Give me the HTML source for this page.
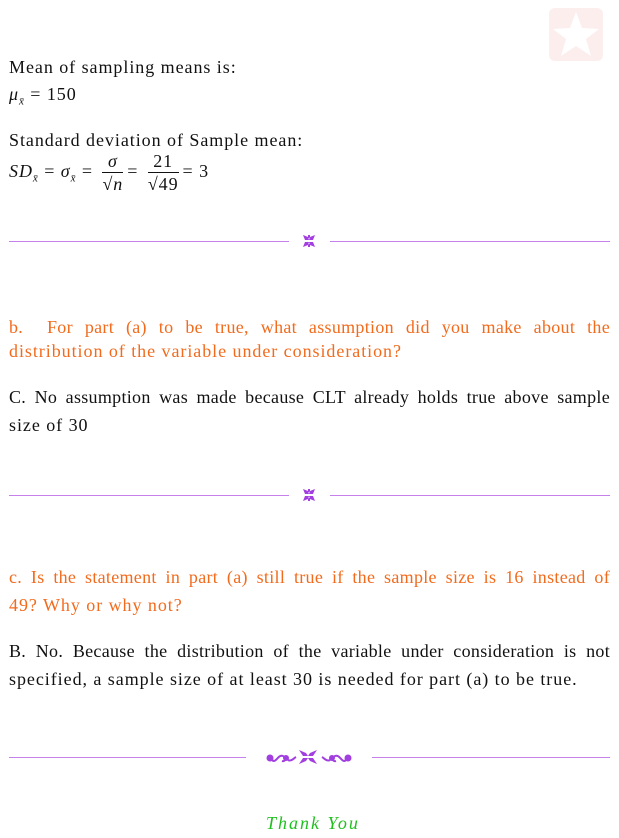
<!DOCTYPE html>
<html><head><meta charset="utf-8"><style>
body{margin:0;width:619px;height:838px;background:#fff;position:relative;font-family:"Liberation Serif",serif;font-size:18px;letter-spacing:0.95px;color:#111;overflow:hidden}
.t{position:absolute;left:9px;white-space:nowrap;line-height:20px}
.o{color:#f26b1d}
.j{width:601px;white-space:normal;text-align:justify;text-align-last:justify;letter-spacing:0.3px}
.hr{position:absolute;height:1px;background:#c77fe9;top:0}
i{font-style:italic}
.fr{display:inline-block;vertical-align:middle;text-align:center;margin:0 4px}
.fr span{display:block;line-height:22px}
.fr .n{border-bottom:1px solid #111}
</style></head><body>
<div style="position:absolute;left:549px;top:8px;width:54px;height:53px;background:#fdeeee;border-radius:6px"></div>
<svg style="position:absolute;left:549px;top:8px" width="54" height="53"><polygon points="27,4 33,20 50,21 37,31 42,48 27,38 12,48 17,31 4,21 21,20" fill="#fff"/></svg>
<div class="t" style="top:57px">Mean of sampling means is:</div>
<div class="t" style="top:84px"><i>μ</i><sub style="font-size:11px"><i>x̄</i></sub> = 150</div>
<div class="t" style="top:130px">Standard deviation of Sample mean:</div>
<div class="t" style="top:148px;line-height:46px"><i>SD</i><sub style="font-size:11px"><i>x̄</i></sub> = <i>σ</i><sub style="font-size:11px"><i>x̄</i></sub> = <span class="fr"><span class="n"><i>σ</i></span><span>√<i>n</i></span></span>= <span class="fr"><span class="n">21</span><span>√49</span></span>= 3</div>
<div class="hr" style="left:9px;top:241px;width:280px"></div>
<div class="hr" style="left:330px;top:241px;width:280px"></div>
<svg style="position:absolute;left:302px;top:234px" width="14" height="14" viewBox="0 0 14 14" fill="#a23fe0"><path d="M1 1 L6 3 L7 6 L3 6 Z M13 1 L8 3 L7 6 L11 6 Z M1 13 L6 11 L7 8 L3 8 Z M13 13 L8 11 L7 8 L11 8 Z M6 1 h2 v3 h-2z M6 10 h2 v3 h-2z"/></svg>
<div class="t o j" style="top:313px;line-height:28px">b.&nbsp; For part (a) to be true, what assumption did you make about the</div>
<div class="t o" style="top:341px">distribution of the variable under consideration?</div>
<div class="t j" style="top:387px">C. No assumption was made because CLT already holds true above sample</div>
<div class="t" style="top:415px">size of 30</div>
<div class="hr" style="left:9px;top:495px;width:280px"></div>
<div class="hr" style="left:330px;top:495px;width:280px"></div>
<svg style="position:absolute;left:302px;top:488px" width="14" height="14" viewBox="0 0 14 14" fill="#a23fe0"><path d="M1 1 L6 3 L7 6 L3 6 Z M13 1 L8 3 L7 6 L11 6 Z M1 13 L6 11 L7 8 L3 8 Z M13 13 L8 11 L7 8 L11 8 Z M6 1 h2 v3 h-2z M6 10 h2 v3 h-2z"/></svg>
<div class="t o j" style="top:567px">c. Is the statement in part (a) still true if the sample size is 16 instead of</div>
<div class="t o" style="top:595px">49? Why or why not?</div>
<div class="t j" style="top:641px">B. No. Because the distribution of the variable under consideration is not</div>
<div class="t" style="top:669px">specified, a sample size of at least 30 is needed for part (a) to be true.</div>
<div class="hr" style="left:9px;top:757px;width:237px"></div>
<div class="hr" style="left:372px;top:757px;width:238px"></div>
<svg style="position:absolute;left:266px;top:748px" width="86" height="18" viewBox="0 0 86 18" fill="none" stroke="#a23fe0" stroke-width="2">
<circle cx="4" cy="10" r="2.5" fill="#a23fe0"/><path d="M6 12 C10 16 12 6 17 8 C21 10 19 14 16 13"/><circle cx="20" cy="10" r="2" fill="#a23fe0"/><path d="M22 12 C25 14 28 10 30 9"/>
<g fill="#a23fe0" stroke="none"><path d="M33 2 L40 5 L42 8 L37 8 Z M51 2 L44 5 L42 8 L47 8 Z M33 16 L40 13 L42 10 L37 10 Z M51 16 L44 13 L42 10 L47 10 Z"/></g>
<path d="M64 12 C61 14 58 10 56 9"/><circle cx="66" cy="10" r="2" fill="#a23fe0"/><path d="M80 12 C76 16 74 6 69 8 C65 10 67 14 70 13"/><circle cx="82" cy="10" r="2.5" fill="#a23fe0"/></svg>
<div class="t" style="left:266px;top:813px;color:#1fbf1f;font-style:italic;letter-spacing:2px">Thank You</div>
</body></html>
